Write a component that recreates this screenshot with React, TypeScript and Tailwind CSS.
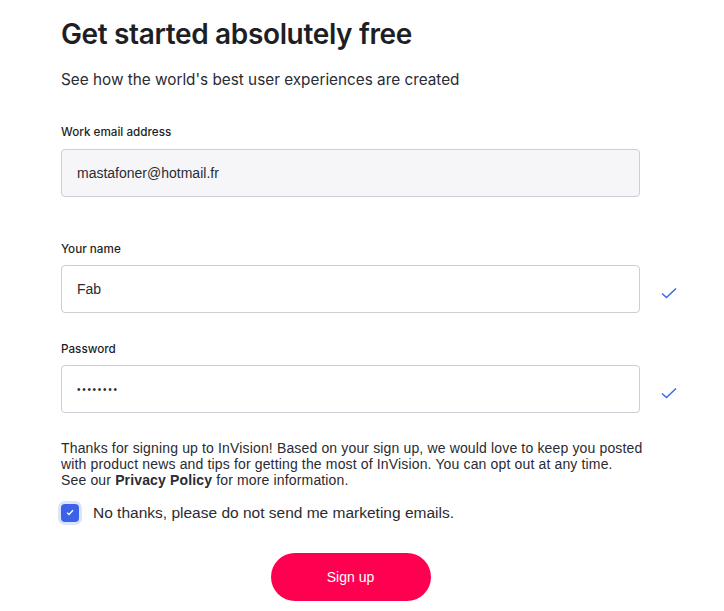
import React from "react";

function Check({ className = "" }: { className?: string }) {
  return (
    <svg width="16" height="12" viewBox="0 0 16 12" className={className} fill="none">
      <path d="M1 6.5L5.5 10.5L15 1.5" stroke="#3a6cf2" strokeWidth="1.6" />
    </svg>
  );
}

export default function App() {
  return (
    <div className="w-[724px] h-[611px] bg-white overflow-hidden font-['Inter',sans-serif] text-[#1e1f26]">
      <div className="pl-[61px] pt-[17px]">
        <h1 className="text-[28px] leading-[34px] font-semibold tracking-[-0.35px]">Get started absolutely free</h1>
        <p className="mt-[17px] text-[15.3px] leading-[24px] text-[#2a2b33]">See how the world's best user experiences are created</p>

        <div className="mt-[32px] w-[663px]">
          <label className="block text-[11.7px] leading-[16px] font-medium">Work email address</label>
          <div className="mt-[9px] flex items-center">
            <div className="w-[579px] h-[48px] rounded-[4px] border border-[#cdcdd5] bg-[#f6f6f9] flex items-center px-[15px] text-[14px] font-['Liberation_Sans',sans-serif] text-[#2a2b33]">
              mastafoner@hotmail.fr
            </div>
          </div>

          <label className="block mt-[44px] text-[11.7px] leading-[16px] font-medium">Your name</label>
          <div className="mt-[8px] flex items-center">
            <div className="w-[579px] h-[48px] rounded-[4px] border border-[#cdcdd5] bg-white flex items-center px-[15px] text-[14px] font-['Liberation_Sans',sans-serif] text-[#2a2b33]">
              Fab
            </div>
            <Check className="ml-[21px] mt-[7px]" />
          </div>

          <label className="block mt-[28px] text-[11.7px] leading-[16px] font-medium">Password</label>
          <div className="mt-[8px] flex items-center">
            <div className="w-[579px] h-[48px] rounded-[4px] border border-[#cdcdd5] bg-white flex items-center px-[15px] text-[14px] text-[#2a2b33]">
              <span className="tracking-[1.7px] text-[10px] font-['Liberation_Sans',sans-serif]">••••••••</span>
            </div>
            <Check className="ml-[21px] mt-[7px]" />
          </div>
        </div>

        <p className="mt-[27px] w-[600px] text-[14px] leading-[16px] tracking-[0.15px] font-['Liberation_Sans',sans-serif] text-[#2a2b33]">
          Thanks for signing up to InVision! Based on your sign up, we would love to keep you posted
          <br />
          with product news and tips for getting the most of InVision. You can opt out at any time.
          <br />
          See our <span className="font-bold">Privacy Policy</span> for more information.
        </p>

        <div className="mt-[13px] flex items-center">
          <div className="w-[18px] h-[18px] rounded-[4px] bg-[#3b62e8] shadow-[0_0_0_3px_rgba(59,98,232,0.18)] flex items-center justify-center">
            <svg width="8" height="7" viewBox="0 0 8 7" fill="none">
              <path d="M1 3.6L3 5.5L7 1.3" stroke="white" strokeWidth="1.3" />
            </svg>
          </div>
          <span className="ml-[14px] text-[15.5px] font-['Liberation_Sans',sans-serif] text-[#2a2b33]">No thanks, please do not send me marketing emails.</span>
        </div>

        <div className="mt-[29px] w-[579px] flex justify-center">
          <button className="w-[160px] h-[48px] rounded-full bg-[#ff0050] text-white text-[14px] font-['Liberation_Sans',sans-serif]">Sign up</button>
        </div>
      </div>
    </div>
  );
}
